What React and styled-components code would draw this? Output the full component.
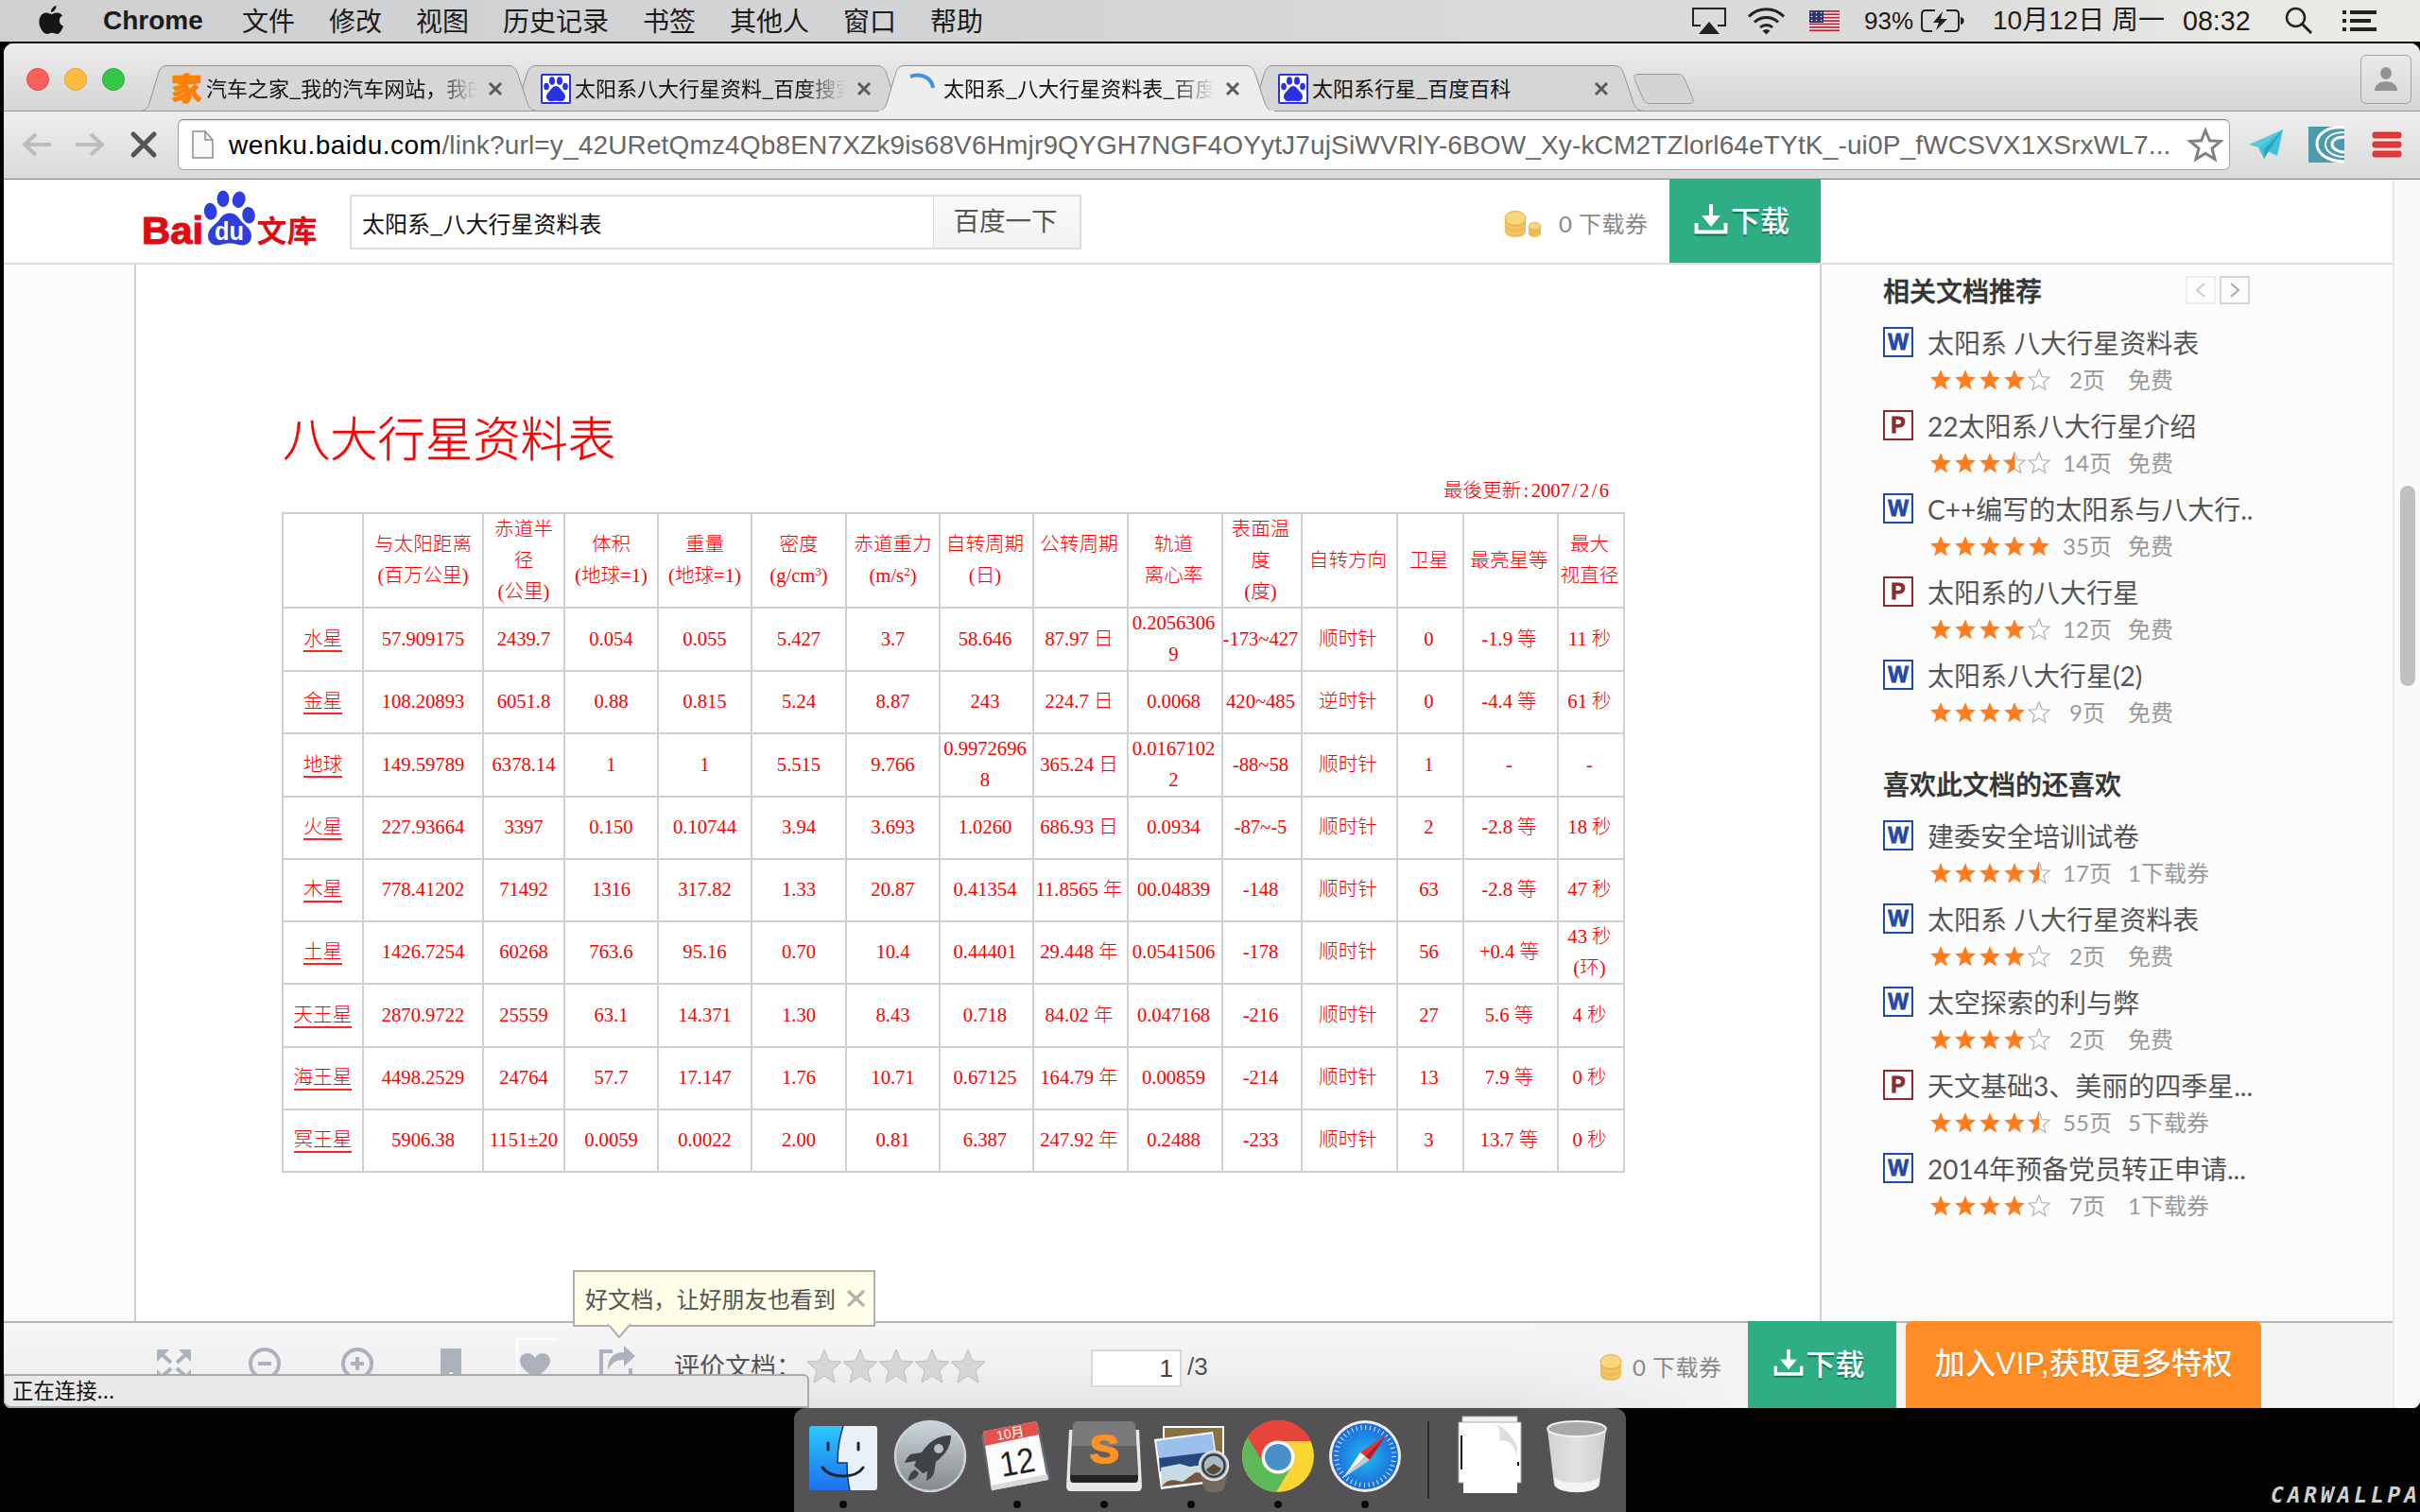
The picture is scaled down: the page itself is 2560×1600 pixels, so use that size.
import React from "react";
import styled, { createGlobalStyle } from "styled-components";

const SANS = `"Liberation Sans", "Noto Sans CJK SC", sans-serif`;
const CJK = `"Noto Sans CJK SC", "Liberation Sans", sans-serif`;
const GEO = `Lato, "Noto Sans CJK SC", sans-serif`;
const SERIF = `"Liberation Serif", "Noto Sans CJK SC", serif`;

const GlobalStyle = createGlobalStyle`
  * { box-sizing: border-box; }
  html, body { margin: 0; padding: 0; background: #020202; }
  body { width: 2560px; height: 1600px; overflow: hidden; font-family: ${SANS}; }
  svg { display: block; flex: none; overflow: visible; }
`;

const Desktop = styled.div`
  width: 2560px;
  height: 1600px;
  display: flex;
  flex-direction: column;
  background: #020202;
  overflow: hidden;
`;

/* ---------- menu bar ---------- */
const MenuBar = styled.header`
  height: 44px;
  flex: none;
  display: flex;
  align-items: center;
  padding: 0 46px 0 41px;
  background: linear-gradient(to right, #cfd0d1 0%, #d2d4d5 45%, #dadbdb 65%, #dadad9 80%, #e8e9e5 92%, #e9eae6 100%);
  color: #1b1b1b;
  font: 28px ${CJK};
  line-height: 44px;
  white-space: nowrap;
`;
const AppName = styled.b`
  font: bold 28px "Liberation Sans", sans-serif;
  width: 109px;
  margin: 0 38px 0 41px;
`;
const Menus = styled.nav`
  display: flex;
  gap: 36px;
  height: 44px;
  line-height: 42px;
`;
const MenuExtras = styled.div`
  margin-left: auto;
  display: flex;
  align-items: center;
  height: 44px;
`;
const Extra = styled.span`
  display: block;
  width: ${(p) => p.$w}px;
  margin-right: ${(p) => p.$after || 0}px;
  font-family: ${SANS};
  font-size: ${(p) => p.$size || 28}px;
  line-height: 42px;
`;

/* ---------- window chrome ---------- */
const Window = styled.main`
  width: 2556px;
  height: 1444px;
  flex: none;
  margin: 2px 0 0 4px;
  border-radius: 10px 10px 8px 8px;
  overflow: hidden;
  background: #fff;
  display: flex;
  flex-direction: column;
`;
const TabStrip = styled.div`
  height: 72px;
  flex: none;
  display: flex;
  align-items: flex-end;
  padding: 0 9px 0 24px;
  background: linear-gradient(#ececec, #d5d5d5);
  box-shadow: inset 0 -1px #969696, inset 0 1px #f8f8f8;
`;
const Lights = styled.div`
  display: flex;
  gap: 16px;
  height: 68px;
  align-items: center;
  margin-right: 17px;
`;
const Light = styled.i`
  width: 24px;
  height: 24px;
  border-radius: 50%;
  background: ${(p) => p.$c};
  border: 1px solid ${(p) => p.$edge};
`;
const Tab = styled.div`
  position: relative;
  z-index: ${(p) => p.$z};
  width: 420px;
  height: 49px;
  margin-right: -30px;
  display: flex;
  align-items: center;
  padding: 0 36px 0 33px;
  color: #111;
  font: 22px ${CJK};
  line-height: 47px;
`;
const TabShape = styled.svg`
  position: absolute;
  left: 0;
  top: 0;
`;
const Favicon = styled.span`
  position: relative;
  width: 32px;
  height: 32px;
  margin-right: 4px;
  flex: none;
`;
const TabTitle = styled.span`
  position: relative;
  width: 286px;
  height: 49px;
  overflow: hidden;
  white-space: nowrap;
  ${(p) => p.$fade && "-webkit-mask-image: linear-gradient(to right, #000 84%, transparent 100%); mask-image: linear-gradient(to right, #000 84%, transparent 100%);"}
`;
const TabClose = styled.svg`
  position: relative;
  margin-left: 13px;
`;
const NewTab = styled.svg`
  margin: 0 0 8px 19px;
`;
const UserButton = styled.div`
  margin: 0 0 8px auto;
  width: 54px;
  height: 52px;
  border: 1px solid #a2a2a2;
  border-radius: 6px;
  background: linear-gradient(#eaeaea, #d9d9d9);
  display: flex;
  align-items: center;
  justify-content: center;
`;
const Toolbar = styled.div`
  height: 72px;
  flex: none;
  display: flex;
  align-items: center;
  padding: 0 16px 2px 19px;
  background: linear-gradient(#eeeeee, #dadada);
  border-bottom: 1px solid #7d7d7d;
`;
const NavIcon = styled.svg`
  margin-right: ${(p) => p.$after}px;
`;
const Omnibox = styled.div`
  width: 2171px;
  height: 54px;
  border: 1px solid #a5a5a5;
  border-top-color: #858585;
  border-radius: 6px;
  background: #fff;
  box-shadow: inset 0 1px 2px #ddd;
  display: flex;
  align-items: center;
  padding: 0 7px 0 14px;
`;
const Url = styled.span`
  width: 2060px;
  margin-left: 16px;
  padding-top: 2px;
  white-space: nowrap;
  font: 28px "Liberation Sans", sans-serif;
  letter-spacing: ${(p) => p.$track}px;
  color: #666;
  b { font-weight: normal; color: #000; letter-spacing: 0.5px; }
`;

/* ---------- page ---------- */
const Viewport = styled.div`
  flex: 1;
  display: flex;
  min-height: 0;
`;
const Page = styled.div`
  width: 2527px;
  display: flex;
  flex-direction: column;
`;
const ScrollTrack = styled.div`
  width: 29px;
  border-left: 2px solid #e7e7e7;
  background: #fafafa;
  padding: 324px 0 0 6px;
`;
const ScrollThumb = styled.div`
  width: 16px;
  height: 212px;
  border-radius: 8px;
  background: #c1c1c1;
`;
const PageHeader = styled.div`
  height: 90px;
  flex: none;
  border-bottom: 2px solid #dcdcdc;
  background: #fff;
  display: flex;
  padding-left: 148px;
`;
const LogoArt = styled.svg`
  margin-top: 10px;
`;
const SearchForm = styled.div`
  display: flex;
  width: 774px;
  height: 58px;
  margin: 16px 0 0 36px;
  border: 2px solid #dcdcdc;
`;
const SearchField = styled.div`
  width: 615px;
  padding: 4px 0 0 11px;
  font: 24px ${CJK};
  line-height: 48px;
  color: #111;
`;
const SearchButton = styled.div`
  flex: 1;
  background: linear-gradient(#fafafa, #f2f2f2);
  border-left: 1px solid #dcdcdc;
  text-align: center;
  padding-right: 3px;
  font: 27.5px ${CJK};
  line-height: 49px;
  color: #555;
`;
const Balance = styled.div`
  display: flex;
  align-items: center;
  font: 24px ${GEO};
  letter-spacing: 0.5px;
  line-height: 40px;
  color: #888;
  white-space: nowrap;
  margin-left: ${(p) => p.$left}px;
  padding-top: ${(p) => p.$top}px;
  width: ${(p) => p.$w}px;
  gap: ${(p) => p.$gap}px;
`;
const DownloadButton = styled.div`
  width: ${(p) => p.$w}px;
  height: 100%;
  background: #2fae86;
  color: #fff;
  display: flex;
  align-items: center;
  justify-content: center;
  gap: 4px;
  padding: 0 6px 4px 0;
  font: 500 31px ${CJK};
  line-height: 82px;
  text-shadow: 0 2px 1px rgba(0, 80, 50, 0.6);
`;
const Columns = styled.div`
  height: 1118px;
  flex: none;
  display: flex;
  background: #fcfcfc;
`;
const Document = styled.article`
  width: 1785px;
  margin-left: 138px;
  border: solid #d0d0d0;
  border-width: 0 2px;
  background: #fff;
  color: #f00;
  padding: 148px 206px 0 154px;
`;
const DocTitle = styled.h1`
  margin: 0 0 -4px 1px;
  font: 300 50.3px ${SERIF};
  -webkit-text-stroke: 0.4px #f00;
  line-height: 76px;
  white-space: nowrap;
`;
const Updated = styled.p`
  margin: 0 0 2px;
  padding-right: 17px;
  text-align: right;
  font: 300 20.6px ${SERIF};
  line-height: 39px;
  height: 40px;
`;
const HalfWidth = styled.span`
  display: inline-block;
  width: 10.3px;
  text-align: center;
`;
const PlanetTable = styled.section`
  width: 1421px;
  border: solid #cfcfcf;
  border-width: 2px 0 0 2px;
  display: grid;
  grid-template-columns: 85px 127px 86px 99px 99px 100px 99px 99px 100px 100px 84px 101px 70px 100px 70px;
  grid-template-rows: 100px 67px 66px 67px 66px 66px 66px 67px 66px 66px;
`;
const Cell = styled.div`
  border: solid #cfcfcf;
  border-width: 0 2px 2px 0;
  padding: 0 ${(p) => (p.$col > 6 ? 3 : 0)}px ${(p) => (p.$head ? 0 : 1)}px 0;
  display: flex;
  flex-direction: column;
  align-items: center;
  justify-content: center;
  white-space: nowrap;
  font: 300 20.6px ${SERIF};
  line-height: 33px;
  div { height: 33px; }
  sup { font-size: 13px; line-height: 0; vertical-align: 7px; }
`;
const PlanetLink = styled.span`
  display: block;
  height: 27px;
  line-height: 26px;
  border-bottom: 2px solid #f22;
`;
const Sidebar = styled.aside`
  width: 604px;
  padding: 6px 151px 0 65px;
`;
const SideHead = styled.div`
  display: flex;
  align-items: center;
  height: 44px;
  margin-top: ${(p) => p.$top || 0}px;
  font: bold 28px ${CJK};
  font-weight: 500;
  line-height: 40px;
  padding-bottom: 3px;
  color: #333;
  -webkit-text-stroke: 0.5px #333;
`;
const Pager = styled.span`
  margin-left: ${(p) => (p.$first ? "auto" : "4px")};
  width: 32px;
  height: 30px;
  border: 2px solid ${(p) => (p.$first ? "#eee" : "#d6d6da")};
  display: flex;
  align-items: center;
  justify-content: center;
`;
const DocItem = styled.div`
  height: 88px;
  padding-top: 16px;
  display: grid;
  grid-template-columns: 47px 1fr;
  grid-template-rows: 34px 44px;
`;
const DocName = styled.div`
  font: 28px ${GEO};
  line-height: 35px;
  color: #555;
  white-space: nowrap;
`;
const DocMeta = styled.div`
  grid-column: 2;
  display: flex;
  align-items: center;
  font: 24px ${GEO};
  line-height: 44px;
  color: #999;
  padding-left: 3px;
  white-space: nowrap;
`;
const PageCount = styled.span`
  width: 80px;
  text-align: center;
  margin: 0 3px 0 0;
`;

/* ---------- bottom bar ---------- */
const BottomBar = styled.div`
  position: relative;
  height: 92px;
  flex: none;
  display: flex;
  align-items: flex-start;
  border-top: 2px solid #b4b4b4;
  background: linear-gradient(to right, transparent 62%, #f4f4f4 73%), linear-gradient(#f6f6f6, #f1f1f1 50%, #e3e3e3);
`;
const BarIcon = styled.svg`
  margin: ${(p) => p.$top}px 0 0 ${(p) => p.$left}px;
`;
const RateLabel = styled.span`
  width: 140px;
  margin: 24px 0 0 41px;
  font: 27px ${CJK};
  line-height: 41px;
  white-space: nowrap;
  overflow: hidden;
  color: #555;
`;
const PageInput = styled.div`
  width: 96px;
  height: 40px;
  margin: 28px 6px 0 112px;
  border: 2px solid #d8d8d8;
  background: #fff;
  text-align: right;
  padding-right: 7px;
  font: 26px ${SANS};
  line-height: 36px;
  color: #444;
`;
const PageTotal = styled.span`
  width: 30px;
  margin-top: 28px;
  font: 26px ${SANS};
  line-height: 36px;
  color: #555;
`;
const BarAction = styled.div`
  height: 92px;
  margin: -2px 0 0 ${(p) => p.$left}px;
`;
const VipButton = styled.div`
  width: 376px;
  height: 92px;
  background: #ff8c24;
  border-radius: 6px 6px 0 0;
  color: #fff;
  text-align: center;
  font: 500 32.3px ${SANS};
  line-height: 90px;
  text-shadow: 0 1px 1px #c86a10;
  white-space: nowrap;
`;
const Tooltip = styled.div`
  position: absolute;
  left: 602px;
  top: -56px;
  width: 320px;
  height: 60px;
  border: 2px solid #b0b0a8;
  background: #fffee9;
  display: flex;
  align-items: center;
  gap: 12px;
  padding-left: 11px;
  font: 24.1px ${CJK};
  line-height: 56px;
  color: #555;
  white-space: nowrap;
`;
const TooltipTail = styled.svg`
  position: absolute;
  left: 34px;
  top: 55px;
`;
const Status = styled.div`
  position: absolute;
  left: 0;
  top: 54px;
  width: 852px;
  height: 36px;
  border: 2px solid #aaa;
  border-left: 1px solid #aaa;
  border-radius: 0 6px 0 8px;
  background: #e9e9e9;
  padding-left: 8px;
  font: 22.4px ${CJK};
  line-height: 29px;
  color: #111;
`;

/* ---------- dock ---------- */
const DockRow = styled.footer`
  height: 110px;
  flex: none;
  display: flex;
  padding-left: 840px;
`;
const Dock = styled.div`
  width: 880px;
  background: #545254;
  border-radius: 12px 12px 0 0;
  display: flex;
  padding: 11px 6px 0;
`;
const DockItem = styled.div`
  width: 92px;
  display: flex;
  flex-direction: column;
  align-items: center;
`;
const Running = styled.i`
  width: 8px;
  height: 8px;
  margin-top: 9px;
  border-radius: 50%;
  background: #0a0a0a;
`;
const DockRule = styled.i`
  width: 2px;
  height: 82px;
  margin: 3px 18px 0 20px;
  background: #2b292b;
`;
const Watermark = styled.div`
  margin: 80px 0 0 682px;
  width: 158px;
  overflow: hidden;
  white-space: nowrap;
  font: italic bold 23px "DejaVu Sans Mono", monospace;
  line-height: 24px;
  letter-spacing: 3.8px;
  color: #d0d0d0;
`;

/* ---------- drawings ---------- */
const PawMark = ({ fill }) => (
  <g fill={fill}>
    <ellipse cx="12" cy="7.5" rx="3" ry="4.3" />
    <ellipse cx="20" cy="7.5" rx="3" ry="4.3" />
    <ellipse cx="6" cy="13.5" rx="2.8" ry="3.8" />
    <ellipse cx="26" cy="13.5" rx="2.8" ry="3.8" />
    <path d="M16 13c3 0 4.4 3 6.500 5.200 2.300 2.300 4.200 4.500 3.300 7.600-1 3.200-4 3.600-6.500 3.200-2-.3-4.600-.3-6.600 0-2.500.4-5.500 0-6.500-3.200-.9-3.100 1-5.300 3.300-7.600C11.600 16 13 13 16 13z" />
  </g>
);
const BaiduIcon = () => (
  <svg width="32" height="32" viewBox="0 0 32 32">
    <rect x="1" y="1" width="30" height="30" rx="1" fill="#fff" stroke="#2932e1" strokeWidth="2" />
    <PawMark fill="#2932e1" />
  </svg>
);
const AutohomeIcon = () => (
  <svg width="32" height="32" viewBox="0 0 32 32">
    <text x="-1" y="28" fontSize="33" fontWeight="900" fill="#ff7f00" stroke="#ff7f00" strokeWidth="0.5" fontFamily="Noto Sans CJK SC, sans-serif">家</text>
  </svg>
);
const Spinner = () => (
  <svg width="32" height="32" viewBox="0 0 32 32">
    <path d="M1 3C12-1 24 4 25 15" fill="none" stroke="#4a90d9" strokeWidth="4" />
  </svg>
);
const Logo = () => (
  <LogoArt width="182" height="60" viewBox="0 0 182 60">
    <text x="-2" y="57.500" fontSize="41" fontWeight="bold" textLength="65" lengthAdjust="spacingAndGlyphs" fill="#e10b14" stroke="#e10b14" strokeWidth="1.200" fontFamily="Liberation Sans, sans-serif">Bai</text>
    <g fill="#2e3edc">
      <ellipse cx="70.700" cy="23.700" rx="6.800" ry="9" transform="rotate(-8 70.700 23.700)" />
      <ellipse cx="84" cy="10.200" rx="6.400" ry="8.800" />
      <ellipse cx="100.700" cy="11.200" rx="6.800" ry="8.800" transform="rotate(14 100.700 11.200)" />
      <ellipse cx="111" cy="27.700" rx="6.800" ry="8.800" transform="rotate(-8 111 27.700)" />
      <path d="M91 25.500c5 0 8.500 3 11 7 3 4.500 12 9 12 17 0 6-4 10-9 10-5 0-8-2-14-2s-9 2-14 2c-5 0-9-4-9-10 0-8 9-12.500 12-17 2.500-4 6-7 11-7z" />
    </g>
    <text x="75" y="54" fontSize="28" fontWeight="bold" textLength="31" lengthAdjust="spacingAndGlyphs" fill="#fff" fontFamily="Liberation Sans, sans-serif">du</text>
    <text x="119.500" y="55.500" fontSize="32" fontWeight="bold" fill="#e10b14" fontFamily="Noto Sans CJK SC, sans-serif">文库</text>
  </LogoArt>
);
const DownloadIcon = ({ s = 34 }) => (
  <svg width={s} height={s * 0.94} viewBox="0 0 34 32">
    <path d="M1.500 20v9.500h31V20" fill="none" stroke="#17704f" strokeWidth="4" transform="translate(0 2)" />
    <path d="M1.500 20v9.500h31V20" fill="none" stroke="#fff" strokeWidth="4" />
    <path d="M15 0h4v12h8L17 24 7 12h8z" fill="#fff" />
  </svg>
);
const Coin = ({ pair }) => (
  <svg width={pair ? 40 : 24} height="28" viewBox={`0 0 ${pair ? 40 : 24} 28`}>
    <path d="M1 8v14c0 3 5 6 11 6s11-3 11-6V8z" fill="#eebb55" />
    <ellipse cx="12" cy="8" rx="11" ry="7.500" fill="#f8d67e" stroke="#e8ab43" />
    <path d="M2 14c4 5 15 6 20 1M2 20c4 5 15 6 20 1" fill="none" stroke="#f4c870" strokeWidth="2" />
    {pair && <path d="M26 17v7c0 5 13 5 13 0v-7z" fill="#eebb55" />}
    {pair && <ellipse cx="32.500" cy="16.500" rx="6.500" ry="4" fill="#f8d67e" stroke="#e8ab43" />}
  </svg>
);
const STAR = "M11 0l3 7.600 8 .6-6.200 5.200 2 8L11 17l-6.800 4.400 2-8L0 8.200l8-.6z";
const Rating = ({ value }) => (
  <svg width="126" height="22" viewBox="0 0 126 22">
    {[0, 1, 2, 3, 4].map((i) => (
      <g key={i} transform={`translate(${i * 26} 0)`}>
        {value < i + 1 && <path d={STAR} fill="#fff" stroke="#b5b5b5" strokeWidth="1.300" />}
        {value >= i + 1 && <path d={STAR} fill="#ff7c1f" />}
        {value === i + 0.5 && <path d="M11 0v17l-6.800 4.400 2-8L0 8.200l8-.6z" fill="#ff7c1f" />}
      </g>
    ))}
  </svg>
);
const FileIcon = ({ kind }) => {
  const c = kind === "W" ? "#1f4aa5" : "#93282b";
  return (
    <svg width="32" height="32" viewBox="0 0 32 32">
      <rect x="1" y="1" width="30" height="30" fill="#fff" stroke={c} strokeWidth="2" />
      <text x="16" y="24" textAnchor="middle" fontSize="23" fontWeight="bold" fill={c} stroke={c} strokeWidth="0.8" fontFamily="Liberation Sans, sans-serif">{kind}</text>
    </svg>
  );
};
const FlagArt = styled.svg`
  margin-right: 26px;
`;
const Flag = () => (
  <FlagArt width="32" height="22" viewBox="0 0 32 22">
    <rect width="32" height="22" fill="#f4efef" />
    {[0, 1, 2, 3, 4, 5, 6].map((i) => <rect key={i} y={i * 3.4} width="32" height="1.7" fill="#b62234" />)}
    <rect width="15" height="13" fill="#32376b" />
    {[0, 1, 2, 3, 4, 5, 6, 7, 8].map((i) => <circle key={i} cx={2.5 + (i % 3) * 5} cy={2.5 + Math.floor(i / 3) * 4} r="0.800" fill="#fff" />)}
  </FlagArt>
);
const BarGlyph = styled.svg`
  margin: 0 ${(p) => p.$after || 0}px 0 ${(p) => p.$before || 0}px;
`;

const TABS = [
  { title: "汽车之家_我的汽车网站，我的", icon: <AutohomeIcon />, z: 3, fade: true },
  { title: "太阳系八大行星资料_百度搜索", icon: <BaiduIcon />, z: 2, fade: true },
  { title: "太阳系_八大行星资料表_百度", icon: <Spinner />, z: 4, fade: true, active: true },
  { title: "太阳系行星_百度百科", icon: <BaiduIcon />, z: 1 },
];

const HEADERS = [
  [], ["与太阳距离", "(百万公里)"], ["赤道半", "径", "(公里)"], ["体积", "(地球=1)"], ["重量", "(地球=1)"],
  ["密度", <>(g/cm<sup>3</sup>)</>], ["赤道重力", <>(m/s<sup>2</sup>)</>], ["自转周期", "(日)"], ["公转周期", ""],
  ["轨道", "离心率"], ["表面温", "度", "(度)"], ["自转方向"], ["卫星"], ["最亮星等"], ["最大", "视直径"],
];
const PLANETS = [
  "水星|57.909175|2439.7|0.054|0.055|5.427|3.7|58.646|87.97 日|0.2056306/9|-173~427|顺时针|0|-1.9 等|11 秒",
  "金星|108.20893|6051.8|0.88|0.815|5.24|8.87|243|224.7 日|0.0068|420~485|逆时针|0|-4.4 等|61 秒",
  "地球|149.59789|6378.14|1|1|5.515|9.766|0.9972696/8|365.24 日|0.0167102/2|-88~58|顺时针|1|-|-",
  "火星|227.93664|3397|0.150|0.10744|3.94|3.693|1.0260|686.93 日|0.0934|-87~-5|顺时针|2|-2.8 等|18 秒",
  "木星|778.41202|71492|1316|317.82|1.33|20.87|0.41354|11.8565 年|00.04839|-148|顺时针|63|-2.8 等|47 秒",
  "土星|1426.7254|60268|763.6|95.16|0.70|10.4|0.44401|29.448 年|0.0541506|-178|顺时针|56|+0.4 等|43 秒/(环)",
  "天王星|2870.9722|25559|63.1|14.371|1.30|8.43|0.718|84.02 年|0.047168|-216|顺时针|27|5.6 等|4 秒",
  "海王星|4498.2529|24764|57.7|17.147|1.76|10.71|0.67125|164.79 年|0.00859|-214|顺时针|13|7.9 等|0 秒",
  "冥王星|5906.38|1151±20|0.0059|0.0022|2.00|0.81|6.387|247.92 年|0.2488|-233|顺时针|3|13.7 等|0 秒",
].map((r) => r.split("|"));

const RELATED = [
  ["W", "太阳系 八大行星资料表", 4, "2页", "免费"],
  ["P", "22太阳系八大行星介绍", 3.5, "14页", "免费"],
  ["W", "C++编写的太阳系与八大行..", 5, "35页", "免费"],
  ["P", "太阳系的八大行星", 4, "12页", "免费"],
  ["W", "太阳系八大行星(2)", 4, "9页", "免费"],
];
const LIKED = [
  ["W", "建委安全培训试卷", 4.5, "17页", "1下载券"],
  ["W", "太阳系 八大行星资料表", 4, "2页", "免费"],
  ["W", "太空探索的利与弊", 4, "2页", "免费"],
  ["P", "天文基础3、美丽的四季星...", 4.5, "55页", "5下载券"],
  ["W", "2014年预备党员转正申请...", 4, "7页", "1下载券"],
];

const DocList = ({ items }) =>
  items.map(([kind, name, stars, pages, price], i) => (
    <DocItem key={i}>
      <FileIcon kind={kind} />
      <DocName>{name}</DocName>
      <DocMeta>
        <Rating value={stars} />
        <PageCount>{pages}</PageCount>
        {price}
      </DocMeta>
    </DocItem>
  ));

const Finder = () => (
  <svg width="78" height="78" viewBox="0 0 78 78">
    <defs>
      <linearGradient id="fb" x1="0" y1="0" x2="0" y2="1"><stop offset="0" stopColor="#2bc8fb" /><stop offset="1" stopColor="#1f6ff0" /></linearGradient>
    </defs>
    <rect x="3" y="8" width="72" height="68" rx="3" fill="url(#fb)" />
    <path d="M39 8h33c2 0 3 1 3 3v62c0 2-1 3-3 3H46c-2-8-3-18-3-29H33C33 33 35 20 39 8z" fill="#e9f0f8" />
    <path d="M39 8c-4 12-6 25-6 39h10c0 11 1 21 3 29" fill="none" stroke="#17375e" strokeWidth="1.500" />
    <path d="M23 26v7M55 26v7" stroke="#14253c" strokeWidth="3" strokeLinecap="round" />
    <path d="M17 52c9 12 35 12 43 0" fill="none" stroke="#14253c" strokeWidth="3" strokeLinecap="round" />
  </svg>
);
const Launchpad = () => (
  <svg width="78" height="78" viewBox="0 0 78 78">
    <defs><linearGradient id="lp" x1="0" y1="0" x2="0" y2="1"><stop offset="0" stopColor="#cbd6dc" /><stop offset="1" stopColor="#85888a" /></linearGradient></defs>
    <circle cx="39" cy="40" r="37" fill="url(#lp)" stroke="#c9d2d6" strokeWidth="2.500" />
    <path d="M61 18c-14 0-24 7-31 18l-12 2c-3 3-5 6-6 9l12-2-2 5 9 8 5-2-1 10c4-2 6-4 8-8l2-12c10-8 16-16 16-28z" fill="#3d4347" />
    <circle cx="48" cy="32" r="5" fill="#b5bfc5" />
    <path d="M23 54c-5 3-7 7-7 12 5-1 9-3 11-8z" fill="#3d4347" />
  </svg>
);
const Calendar = () => (
  <svg width="78" height="78" viewBox="0 0 78 78">
    <path d="M1 18l60-14 13 60-63 13z" fill="#667079" />
    <path d="M3 14l56-11 12 62-59 11z" fill="#fbfbfb" />
    <path d="M3 14l56-11 3 14-57 12z" fill="#e4524b" />
    <g transform="rotate(-10 38 40)">
      <text x="36" y="20" textAnchor="middle" fontSize="14" fill="#fff" fontFamily="Liberation Sans, Noto Sans CJK SC, sans-serif">10月</text>
      <text x="38" y="59" textAnchor="middle" fontSize="37" fill="#222" textLength="37" lengthAdjust="spacingAndGlyphs" fontFamily="Liberation Sans, sans-serif">12</text>
    </g>
    <path d="M11 71l60-12 1 6-59 11z" fill="#d9dad6" />
  </svg>
);
const Sublime = () => (
  <svg width="84" height="78" viewBox="0 0 84 78">
    <path d="M5 12h74l3 60c0 3-2 5-4 5H6c-2 0-4-2-4-5z" fill="#e7e7e7" />
    <path d="M10 5h64l4 58c0 3-1 5-3 5H9c-2 0-3-2-3-5z" fill="#232323" />
    <path d="M13 3h58c2 0 4 1 4 4l3 49c0 3-1 4-3 4H9c-2 0-3-1-3-4L9 7c0-3 2-4 4-4z" fill="#5f5f5f" />
    <path d="M13 3h58c2 0 4 1 4 4l1 22H8L9 7c0-3 2-4 4-4z" fill="#7a7a7a" />
    <text x="42" y="47" textAnchor="middle" fontSize="43" fontWeight="bold" textLength="31" lengthAdjust="spacingAndGlyphs" fill="#fb9224" stroke="#fb9224" strokeWidth="2" strokeLinejoin="round" fontFamily="Liberation Sans, sans-serif">S</text>
  </svg>
);
const Preview = () => (
  <svg width="80" height="78" viewBox="0 0 80 78">
    <rect x="10" y="8" width="65" height="60" fill="#fff" />
    <rect x="12" y="10" width="61" height="56" fill="#8a7142" />
    <path d="M1 22l62-8 8 53-63 8z" fill="#fff" />
    <path d="M3 24l59-8 3 20-59 8z" fill="#9cc0ee" />
    <path d="M6 42l59-7 1 12-59 9z" fill="#27477f" />
    <path d="M8 52l20-4 14 4 24-6 3 19-60 8z" fill="#c5dbe6" />
    <path d="M9 72c8-10 15-6 22-5l14-10 22 3 1 5z" fill="#75583d" />
    <path d="M50 48l27 0c2 10 0 22-3 28-5 3-15 3-19 0-4-8-5-18-5-28z" fill="#75695e" />
    <circle cx="64" cy="50" r="15" fill="#738da0" stroke="#e0e0e0" strokeWidth="2.500" />
    <circle cx="64" cy="50" r="11.500" fill="#a9bac4" stroke="#333" strokeWidth="2" />
    <path d="M56 54l8-6 8 5c-4 8-13 8-16 1z" fill="#5c4a38" />
  </svg>
);
const ChromeIcon = () => (
  <svg width="78" height="78" viewBox="0 0 78 78">
    <circle cx="39" cy="40" r="38" fill="#fbd632" />
    <path d="M39 40L7 20a38 38 0 0 0 30 58l18-30z" fill="#5dba5a" />
    <path d="M7 20a38 38 0 0 1 67 4H39v15l-16 8z" fill="#e8453a" />
    <circle cx="39" cy="41" r="17.500" fill="#fff" />
    <circle cx="39" cy="41" r="14" fill="#4a90c8" />
  </svg>
);
const Safari = () => (
  <svg width="78" height="78" viewBox="0 0 78 78">
    <defs><radialGradient id="sf"><stop offset="0" stopColor="#23bcee" /><stop offset="1" stopColor="#1b68dc" /></radialGradient></defs>
    <circle cx="39" cy="40" r="38" fill="#eceef0" />
    <circle cx="39" cy="40" r="35" fill="url(#sf)" />
    <circle cx="39" cy="40" r="30.500" fill="none" stroke="#d9effc" strokeWidth="5" strokeDasharray="1 3.790" />
    <path d="M62 17L34 36l5 4z" fill="#f03030" />
    <path d="M62 17L44 44l-5-4z" fill="#c01d20" />
    <path d="M16 63l18-27 5 4z" fill="#fff" />
    <path d="M16 63l28-19-5-4z" fill="#c7c9cc" />
  </svg>
);
const Papers = () => (
  <svg width="66" height="82" viewBox="0 0 66 82">
    <rect x="4" y="-2" width="58" height="68" fill="#f3f3f3" stroke="#bbb" />
    <rect x="0" y="4" width="66" height="64" fill="#fff" stroke="#aaa" />
    <path d="M3 18v36M63 46v4" stroke="#111" strokeWidth="2" />
    <path d="M5 6h34c12 3 22 16 23 34v39H5z" fill="#fff" />
    <path d="M39 6c5 4 5 10 4 18 8-2 15 2 19 16V30C56 17 48 9 39 6z" fill="#dedede" />
  </svg>
);
const Trash = () => (
  <svg width="66" height="82" viewBox="0 0 66 82">
    <defs><linearGradient id="tr"><stop offset="0" stopColor="#d2d2d4" /><stop offset=".5" stopColor="#e2e2e4" /><stop offset="1" stopColor="#cdcdcf" /></linearGradient></defs>
    <path d="M2 12l7 58c3 11 45 11 48 0l7-58z" fill="url(#tr)" />
    <ellipse cx="33" cy="11" rx="31" ry="8" fill="#aaa9aa" stroke="#f1f1f1" strokeWidth="2" />
    <path d="M9 62c8 8 40 8 48 0l-1 9c-5 9-41 9-46 0z" fill="#f3f3f4" />
  </svg>
);

const DOCK = [
  [Finder, true], [Launchpad, false], [Calendar, true], [Sublime, true], [Preview, true], [ChromeIcon, true], [Safari, true],
];

export default function App() {
  return (
    <Desktop>
      <GlobalStyle />
      <MenuBar>
        <svg width="27" height="32" viewBox="0 0 27 32">
          <path d="M18.500 0c.3 3-2.500 6.800-5.500 6.800C12.600 3.700 15.700.5 18.500 0zM13.500 9c1.300 0 3-1.600 5.800-1.500 2.500.1 4.500 1.200 5.700 3-4.700 2.700-4 9 1 11.200-1 3-3.500 8-6.600 8.200-2 0-3-1.200-5.300-1.200s-3.300 1.200-5.300 1.200C4.500 30 .3 22.500.4 17.200.5 10.500 4.500 7.500 8 7.500c2.300 0 4 1.500 5.500 1.500z" fill="#151515" />
        </svg>
        <AppName>Chrome</AppName>
        <Menus>
          {["文件", "修改", "视图", "历史记录", "书签", "其他人", "窗口", "帮助"].map((m) => <span key={m}>{m}</span>)}
        </Menus>
        <MenuExtras>
          <BarGlyph $after={22} width="36" height="28" viewBox="0 0 36 28">
            <path d="M9 19H1V1h34v18h-8" fill="none" stroke="#222" strokeWidth="2" />
            <path d="M18 15l11 13H7z" fill="#222" />
          </BarGlyph>
          <BarGlyph $after={25} width="41" height="28" viewBox="0 0 41 28">
            <g fill="none" stroke="#222" strokeWidth="3">
              <path d="M2 9.500a26 26 0 0 1 37 0M8 15.500a18 18 0 0 1 25 0M14 21a9.500 9.500 0 0 1 13 0" />
            </g>
            <path d="M16.500 24.500a6 6 0 0 1 8 0l-4 4z" fill="#222" />
          </BarGlyph>
          <Flag />
          <Extra $w={52} $after={8} $size={26}>93%</Extra>
          <BarGlyph $after={29} width="47" height="24" viewBox="0 0 47 24">
            <path d="M15 1H5C2 1 1 2 1 5v14c0 3 1 4 4 4h7M27 1h9c3 0 4 1 4 4v14c0 3-1 4-4 4H25" fill="none" stroke="#222" strokeWidth="2" />
            <path d="M42 8c5 1 5 7 0 8zM23 2l-10 12h6l-3 8 12-12h-7z" fill="#222" />
          </BarGlyph>
          <Extra $w={186} $after={15} $size={28}>10月12日 周一</Extra>
          <Extra $w={76} $after={32} $size={28.6}>08:32</Extra>
          <BarGlyph $after={31} width="30" height="30" viewBox="0 0 30 30">
            <circle cx="11.500" cy="11.500" r="9.500" fill="none" stroke="#222" strokeWidth="2.500" />
            <path d="M18 18l10 10" stroke="#222" strokeWidth="3" />
          </BarGlyph>
          <svg width="36" height="22" viewBox="0 0 36 22">
            <path d="M0 2h4M0 11h4M0 20h4M8 2h28M8 11h22M8 20h28" stroke="#222" strokeWidth="4" />
          </svg>
        </MenuExtras>
      </MenuBar>

      <Window>
        <TabStrip>
          <Lights>
            <Light $c="#fc605b" $edge="#df4744" />
            <Light $c="#fdbc40" $edge="#de9f34" />
            <Light $c="#34c84a" $edge="#27aa35" />
          </Lights>
          {TABS.map((t) => (
            <Tab key={t.title} $z={t.z}>
              <TabShape width="420" height="49" viewBox="0 0 420 49">
                <path d="M0 48.500C7 47 8 44 10 37L18 10C20 3 23 .5 28 .5H388c6 0 9 2.500 11 9.500l9 27c2 7 4 11 12 11.500z"
                  fill={t.active ? "#eeeeee" : "#d6d6d6"} stroke="#949494" />
                {t.active && <path d="M1 48.500h418" stroke="#eeeeee" strokeWidth="2" />}
              </TabShape>
              <Favicon>{t.icon}</Favicon>
              <TabTitle $fade={t.fade}>{t.title}</TabTitle>
              <TabClose width="14" height="14" viewBox="0 0 14 14">
                <path d="M1 1l12 12M13 1L1 13" stroke="#5b5b5b" strokeWidth="3" />
              </TabClose>
            </Tab>
          ))}
          <NewTab width="64" height="32" viewBox="0 0 64 32">
            <path d="M5 .5h42c4 0 6 2 7.500 6l8 19c1.500 4 0 6-3 6H18c-5 0-7-2-8.500-6l-8-19C0 2 1 .5 5 .5z" fill="#d4d4d4" stroke="#999" />
          </NewTab>
          <UserButton>
            <svg width="24" height="26" viewBox="0 0 24 26">
              <ellipse cx="12" cy="6.500" rx="6" ry="6.500" fill="#929292" />
              <path d="M0 25c0-13 24-13 24 0z" fill="#929292" />
            </svg>
          </UserButton>
        </TabStrip>

        <Toolbar>
          <NavIcon $after={24} width="32" height="26" viewBox="0 0 32 26">
            <path d="M15 2L3 13l12 11M4 13h27" fill="none" stroke="#bcbcbc" strokeWidth="4" />
          </NavIcon>
          <NavIcon $after={27} width="32" height="26" viewBox="0 0 32 26">
            <path d="M17 2l12 11-12 11M28 13H1" fill="none" stroke="#bcbcbc" strokeWidth="4" />
          </NavIcon>
          <NavIcon $after={22} width="28" height="26" viewBox="0 0 28 26">
            <path d="M3 2l22 22M25 2L3 24" stroke="#555" strokeWidth="5" strokeLinecap="round" />
          </NavIcon>
          <Omnibox>
            <svg width="23" height="30" viewBox="0 0 23 30">
              <path d="M1 1h13l8 9v19H1z" fill="#f8f8f8" stroke="#8d8d8d" strokeWidth="1.500" />
              <path d="M14 1v9h8" fill="none" stroke="#8d8d8d" strokeWidth="1.500" />
            </svg>
            <Url $track={0.155}>
              <b>wenku.baidu.com</b>/link?url=y_42URetQmz4Qb8EN7XZk9is68V6Hmjr9QYGH7NGF4OYytJ7ujSiWVRlY-6BOW_Xy-kCM2TZlorl64eTYtK_-ui0P_fWCSVX1XSrxWL7...
            </Url>
            <BarGlyph $before={13} width="36" height="36" viewBox="0 0 36 36">
              <path d="M18 3l4.400 10.800L34 14.600l-9 7.400 3 11.500-10-6.300-10 6.300L11 22l-9-7.400 11.600-.8z" fill="#fff" stroke="#808080" strokeWidth="3" />
            </BarGlyph>
          </Omnibox>
          <BarGlyph $before={20} width="36" height="32" viewBox="0 0 36 32">
            <path d="M36 0L0 16l10 3z" fill="#5cc6dd" />
            <path d="M36 0L10 19l6 12 4-8 10 5z" fill="#3fc3dc" />
            <path d="M36 0L16 21v10l5-8z" fill="#2aa5c0" />
          </BarGlyph>
          <BarGlyph $before={27} width="38" height="38" viewBox="0 0 38 38">
            <rect width="38" height="38" fill="#4b9bad" />
            <g fill="none" stroke="#fff" strokeWidth="3">
              <path d="M38 1C20-1 9 8 9 18c0 11 12 19 29 19" />
              <path d="M38 6c-13 0-20 5-20 13 0 7 8 13 20 13" strokeWidth="2" />
              <path d="M38 11c-8 0-13 3-13 8 0 4 6 8 13 8" />
            </g>
          </BarGlyph>
          <BarGlyph $before={30} width="30" height="26" viewBox="0 0 30 26">
            {[0, 10, 20].map((y) => <rect key={y} y={y} width="30" height="6" rx="2" fill="#e5383b" stroke="#c42226" strokeWidth="0.800" />)}
          </BarGlyph>
        </Toolbar>

        <Viewport>
          <Page>
            <PageHeader>
              <Logo />
              <SearchForm>
                <SearchField>太阳系_八大行星资料表</SearchField>
                <SearchButton>百度一下</SearchButton>
              </SearchForm>
              <Balance $left={447} $top={5} $w={175} $gap={18}><Coin pair />0 下载券</Balance>
              <DownloadButton $w={160}><DownloadIcon />下载</DownloadButton>
            </PageHeader>

            <Columns>
              <Document>
                <DocTitle>八大行星资料表</DocTitle>
                <Updated>
                  最後更新<HalfWidth>:</HalfWidth>2007<HalfWidth>/</HalfWidth>2<HalfWidth>/</HalfWidth>6
                </Updated>
                <PlanetTable>
                  {HEADERS.map((lines, i) => (
                    <Cell key={i} $col={i} $head>{lines.map((l, j) => <div key={j}>{l}</div>)}</Cell>
                  ))}
                  {PLANETS.map((row) =>
                    row.map((v, i) => (
                      <Cell key={row[0] + i} $col={i}>
                        {i === 0 ? <PlanetLink>{v}</PlanetLink> : v.split("/").map((l) => <div key={l}>{l}</div>)}
                      </Cell>
                    ))
                  )}
                </PlanetTable>
              </Document>
              <Sidebar>
                <SideHead>
                  相关文档推荐
                  <Pager $first><svg width="10" height="16" viewBox="0 0 10 16"><path d="M9 1L1 8l8 7" fill="none" stroke="#ccc" strokeWidth="2" /></svg></Pager>
                  <Pager><svg width="10" height="16" viewBox="0 0 10 16"><path d="M1 1l8 7-8 7" fill="none" stroke="#aaa" strokeWidth="2" /></svg></Pager>
                </SideHead>
                <DocList items={RELATED} />
                <SideHead $top={38}>喜欢此文档的还喜欢</SideHead>
                <DocList items={LIKED} />
              </Sidebar>
            </Columns>

            <BottomBar>
              <BarIcon $left={161} $top={27} width="38" height="36" viewBox="0 0 38 36">
                <path d="M1 1h13L1 14zM37 1H24l13 13zM1 35h13L1 22zM37 35H24l13-13z" fill="#abb1bd" />
                <path d="M5 5l11 10M33 5L22 15M5 31l11-10M33 31L22 21" stroke="#abb1bd" strokeWidth="4" />
              </BarIcon>
              <BarIcon $left={60} $top={26} width="34" height="36" viewBox="0 0 34 36">
                <circle cx="17" cy="17" r="15" fill="none" stroke="#abb1bd" strokeWidth="4" />
                <path d="M10 17h14" stroke="#abb1bd" strokeWidth="4" />
              </BarIcon>
              <BarIcon $left={64} $top={26} width="34" height="36" viewBox="0 0 34 36">
                <circle cx="17" cy="17" r="15" fill="none" stroke="#abb1bd" strokeWidth="4" />
                <path d="M10 17h14M17 10v14" stroke="#abb1bd" strokeWidth="4" />
              </BarIcon>
              <BarIcon $left={71} $top={27} width="22" height="34" viewBox="0 0 22 34"><path d="M0 0h22v32l-9-4v-3H9v3l-9 4z" fill="#abb1bd" /></BarIcon>
              <BarIcon $left={58} $top={16} width="44" height="50" viewBox="0 0 44 50">
                <path d="M1 50V1h43" fill="none" stroke="#fff" strokeWidth="2" />
                <path d="M20 43C12 36 4 31 4 24c0-9 12-11 16-3 4-8 16-6 16 3 0 7-8 12-16 19z" fill="#abb1bd" />
              </BarIcon>
              <BarIcon $left={44} $top={24} width="38" height="40" viewBox="0 0 38 40">
                <path d="M14 6H2v32h31V24" fill="none" stroke="#abb1bd" strokeWidth="4" />
                <path d="M9 26C9 12 16 7 26 7V0l12 11-12 11v-7c-8 0-13 3-17 11z" fill="#abb1bd" />
              </BarIcon>
              <RateLabel>评价文档：</RateLabel>
              <BarIcon $left={1} $top={27} width="188" height="38" viewBox="0 0 188 38">
                {[0, 1, 2, 3, 4].map((i) => (
                  <path key={i} transform={`translate(${i * 38} 0)`} d="M18 1l5 12 13 1-10 9 3 13-11-7-11 7 3-13L0 14l13-1z" fill="#d5d5d5" stroke="#bdbdbd" />
                ))}
              </BarIcon>
              <PageInput>1</PageInput>
              <PageTotal>/3</PageTotal>
              <Balance $left={406} $top={27} $w={157} $gap={11}><Coin />0 下载券</Balance>
              <BarAction $left={0}><DownloadButton $w={157}><DownloadIcon s={30} />下载</DownloadButton></BarAction>
              <BarAction $left={10}><VipButton>加入VIP,获取更多特权</VipButton></BarAction>
              <Tooltip>
                好文档，让好朋友也看到
                <svg width="19" height="18" viewBox="0 0 19 18"><path d="M1 1l17 16M18 1L1 17" stroke="#b4b4ae" strokeWidth="3.500" /></svg>
                <TooltipTail width="26" height="15" viewBox="0 0 26 15">
                  <path d="M1 0l12 14L25 0" fill="#fffee9" stroke="#b0b0a8" strokeWidth="2" />
                  <path d="M2 0h22" stroke="#fffee9" strokeWidth="3" />
                </TooltipTail>
              </Tooltip>
              <Status>正在连接...</Status>
            </BottomBar>
          </Page>
          <ScrollTrack><ScrollThumb /></ScrollTrack>
        </Viewport>
      </Window>

      <DockRow>
        <Dock>
          {DOCK.map(([Icon, running], i) => (
            <DockItem key={i}>
              <Icon />
              {running && <Running />}
            </DockItem>
          ))}
          <DockRule />
          <DockItem><Papers /></DockItem>
          <DockItem><Trash /></DockItem>
        </Dock>
        <Watermark>CARWALLPAPERS</Watermark>
      </DockRow>
    </Desktop>
  );
}
